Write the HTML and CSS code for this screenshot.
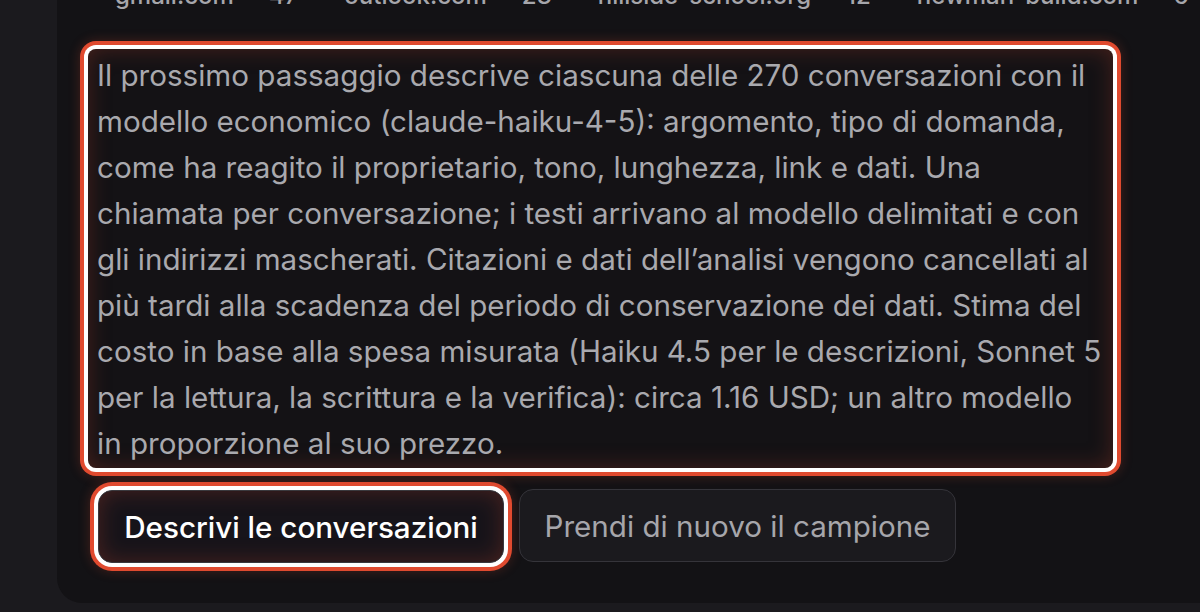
FILE: index.html
```html
<!DOCTYPE html>
<html lang="it">
<head>
<meta charset="utf-8">
<title>Descrivi le conversazioni</title>
<link rel="stylesheet" href="styles.css">
</head>
<body>
<div class="card">
  <div class="domains">
    <span class="domain"><span class="name">gmail.com</span><span class="count">47</span></span>
    <span class="domain"><span class="name">outlook.com</span><span class="count">23</span></span>
    <span class="domain"><span class="name">hillside-school.org</span><span class="count">12</span></span>
    <span class="domain"><span class="name">newman-build.com</span><span class="count">6</span></span>
  </div>
  <div class="notice highlight">Il prossimo passaggio descrive ciascuna delle 270 conversazioni con il modello economico (claude-haiku-4-5): argomento, tipo di domanda, come ha reagito il proprietario, tono, lunghezza, link e dati. Una chiamata per conversazione; i testi arrivano al modello delimitati e con gli indirizzi mascherati. Citazioni e dati dell’analisi vengono cancellati al più tardi alla scadenza del periodo di conservazione dei dati. Stima del costo in base alla spesa misurata (Haiku 4.5 per le descrizioni, Sonnet 5 per la lettura, la scrittura e la verifica): circa 1.16 USD; un altro modello in proporzione al suo prezzo.</div>
  <div class="actions">
    <button class="btn btn-primary highlight">Descrivi le conversazioni</button>
    <button class="btn btn-secondary">Prendi di nuovo il campione</button>
  </div>
</div>
</body>
</html>
```

FILE: styles.css
```css
html, body {
  margin: 0;
  padding: 0;
  background: #1b1a1e;
  overflow: hidden;
  font-family: Inter, "Noto Sans", "Liberation Sans", sans-serif;
}

.card {
  margin-left: 57px;
  width: 1300px;
  height: 603px;
  box-sizing: border-box;
  background: #131215;
  border-bottom-left-radius: 25px;
  padding: 0 0 0 31px;
  display: flex;
  flex-direction: column;
}

.domains {
  display: flex;
  gap: 46px;
  margin-top: -16px;
  margin-left: 27px;
  font-size: 24px;
  line-height: 24px;
  font-weight: 500;
  color: #a6a6ab;
  white-space: nowrap;
}

.domain {
  display: flex;
  gap: 35px;
}

.notice {
  margin-top: 41px;
  width: 1025px;
  box-sizing: border-box;
  padding: 3px 9px 2px 9px;
  font-size: 29.6px;
  line-height: 46px;
  color: #a9a9ae;
  background: #141215;
  border-radius: 8px;
}

.highlight {
  box-shadow:
    inset 0 0 22px rgba(170, 60, 40, 0.35),
    0 0 0 4px #ffffff,
    0 0 0 8px #e04a2f,
    0 0 12px 8px rgba(224, 74, 47, 0.25);
}

.actions {
  display: flex;
  gap: 15px;
  margin-top: 21px;
  padding-left: 10px;
}

.btn {
  height: 73px;
  box-sizing: border-box;
  border-radius: 14px;
  font-family: inherit;
  font-size: 29.6px;
  padding: 0 20px;
  cursor: pointer;
  white-space: nowrap;
}

.btn-primary {
  width: 406px;
  margin-top: 1px;
  background: #17141a;
  color: #ffffff;
  font-weight: 500;
  border: 1px solid #3a393e;
}

.btn-secondary {
  width: 437px;
  background: #1b1a1e;
  color: #a6a6ab;
  font-weight: 400;
  border: 1px solid #35343a;
}
```
